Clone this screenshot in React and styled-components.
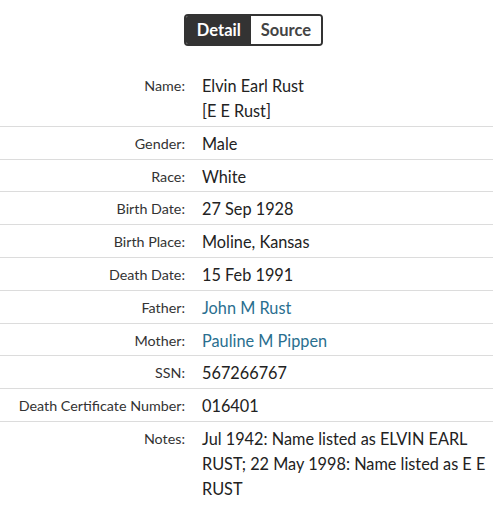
import React from "react";
import styled, { createGlobalStyle } from "styled-components";

const Global = createGlobalStyle`
  html, body { margin: 0; padding: 0; background: #fff; }
  body { font-family: "Lato", "Noto Sans", sans-serif; color: #222; }
`;

const Page = styled.div`
  width: 493px;
  padding-top: 14px;
`;

const Toggle = styled.div`
  display: flex;
  justify-content: center;
  padding-left: 14px;
  margin-bottom: 23px;
`;

const Group = styled.div`
  display: flex;
  border: 2px solid #333;
  border-radius: 4px;
  overflow: hidden;
  height: 28px;
`;

const Seg = styled.button`
  font-family: inherit;
  font-weight: 700;
  font-size: 16.5px;
  border: 0;
  margin: 0;
  padding: 0 ${(p) => (p.$active ? 10.5 : 9.5)}px;
  background: ${(p) => (p.$active ? "#333" : "#fff")};
  color: ${(p) => (p.$active ? "#fff" : "#444")};
  cursor: pointer;
`;

const Row = styled.div`
  display: grid;
  grid-template-columns: 185px 1fr;
  column-gap: 17px;
  padding: 4px 0 2.8px;
  border-bottom: ${(p) => (p.$last ? "0" : "1px solid #dcdcdc")};
  line-height: 25px;
`;

const Label = styled.div`
  text-align: right;
  font-size: 14.3px;
  color: #333;
`;

const Value = styled.div`
  font-size: 16.3px;
  color: #222;
`;

const Link = styled.a`
  color: #2a6f8f;
  text-decoration: none;
`;

const rows = [
  ["Name", <>Elvin Earl Rust<br />[E E Rust]</>],
  ["Gender", "Male"],
  ["Race", "White"],
  ["Birth Date", "27 Sep 1928"],
  ["Birth Place", "Moline, Kansas"],
  ["Death Date", "15 Feb 1991"],
  ["Father", <Link href="#">John M Rust</Link>],
  ["Mother", <Link href="#">Pauline M Pippen</Link>],
  ["SSN", "567266767"],
  ["Death Certificate Number", "016401"],
  ["Notes", "Jul 1942: Name listed as ELVIN EARL RUST; 22 May 1998: Name listed as E E RUST"],
];

export default function App() {
  return (
    <Page>
      <Global />
      <Toggle>
        <Group>
          <Seg $active>Detail</Seg>
          <Seg>Source</Seg>
        </Group>
      </Toggle>
      {rows.map(([l, v], i) => (
        <Row key={l} $last={i === rows.length - 1}>
          <Label>{l}:</Label>
          <Value>{v}</Value>
        </Row>
      ))}
    </Page>
  );
}
